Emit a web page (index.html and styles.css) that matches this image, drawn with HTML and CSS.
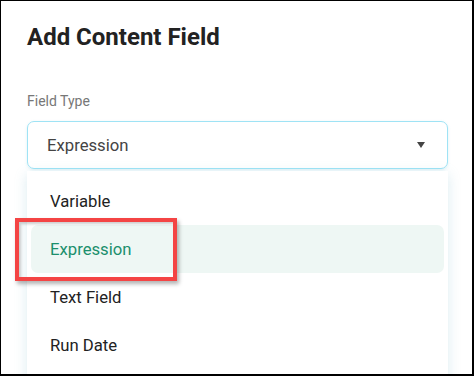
FILE: index.html
```html
<!DOCTYPE html>
<html lang="en">
<head>
    <meta charset="UTF-8">
    <title>Add Content Field</title>
    <link rel="stylesheet" href="styles.css">
</head>
<body>
<div class="frame">
    <h1 class="title">Add Content Field</h1>
    <div class="label">Field Type</div>
    <div class="select">
        <span>Expression</span>
        <span class="arrow"></span>
    </div>
    <ul class="menu">
        <li>Variable</li>
        <li class="active">Expression</li>
        <li>Text Field</li>
        <li>Run Date</li>
    </ul>
    <div class="mark"></div>
</div>
</body>
</html>
```

FILE: styles.css
```css
*{
    margin:0;
    padding:0;
    box-sizing:border-box;
}
body{
    background:#fff;
    font-family:Roboto, "Liberation Sans", sans-serif;
}
.frame{
    position:relative;
    width:474px;
    height:376px;
    border:1px solid #000;
    border-right-width:2px;
    border-bottom-width:2px;
    padding:22px 24px 0 26px;
    overflow:hidden;
}
.title{
    font-size:24px;
    line-height:28px;
    font-weight:700;
    color:#222;
}
.label{
    margin-top:40px;
    font-size:14px;
    line-height:20px;
    color:#777;
}
.select{
    margin-top:10px;
    height:48px;
    border:1px solid #9fe3f5;
    border-radius:7px;
    display:flex;
    align-items:center;
    justify-content:space-between;
    padding:0 22px 0 19px;
    font-size:16.7px;
    color:#444;
    box-shadow:0 1px 3px rgba(120,200,220,.25);
}
.arrow{
    width:0;
    height:0;
    border-left:4.5px solid transparent;
    border-right:4.5px solid transparent;
    border-top:6px solid #444;
}
.menu{
    list-style:none;
    margin-top:2px;
    padding:6px 4px;
    background:#fff;
    box-shadow:0 3px 12px rgba(90,170,190,.22);
    height:220px;
}
.menu li{
    height:48px;
    display:flex;
    align-items:center;
    padding-left:19px;
    font-size:16.7px;
    color:#222;
    border-radius:7px;
}
.menu li.active{
    background:#eef7f4;
    color:#1b8f6c;
}
.mark{
    position:absolute;
    left:14px;
    top:217px;
    width:162px;
    height:63px;
    border:4px solid #f44444;
    box-shadow:2px 3px 4px rgba(0,0,0,.3), inset 2px 2px 3px rgba(0,0,0,.2);
}
```
